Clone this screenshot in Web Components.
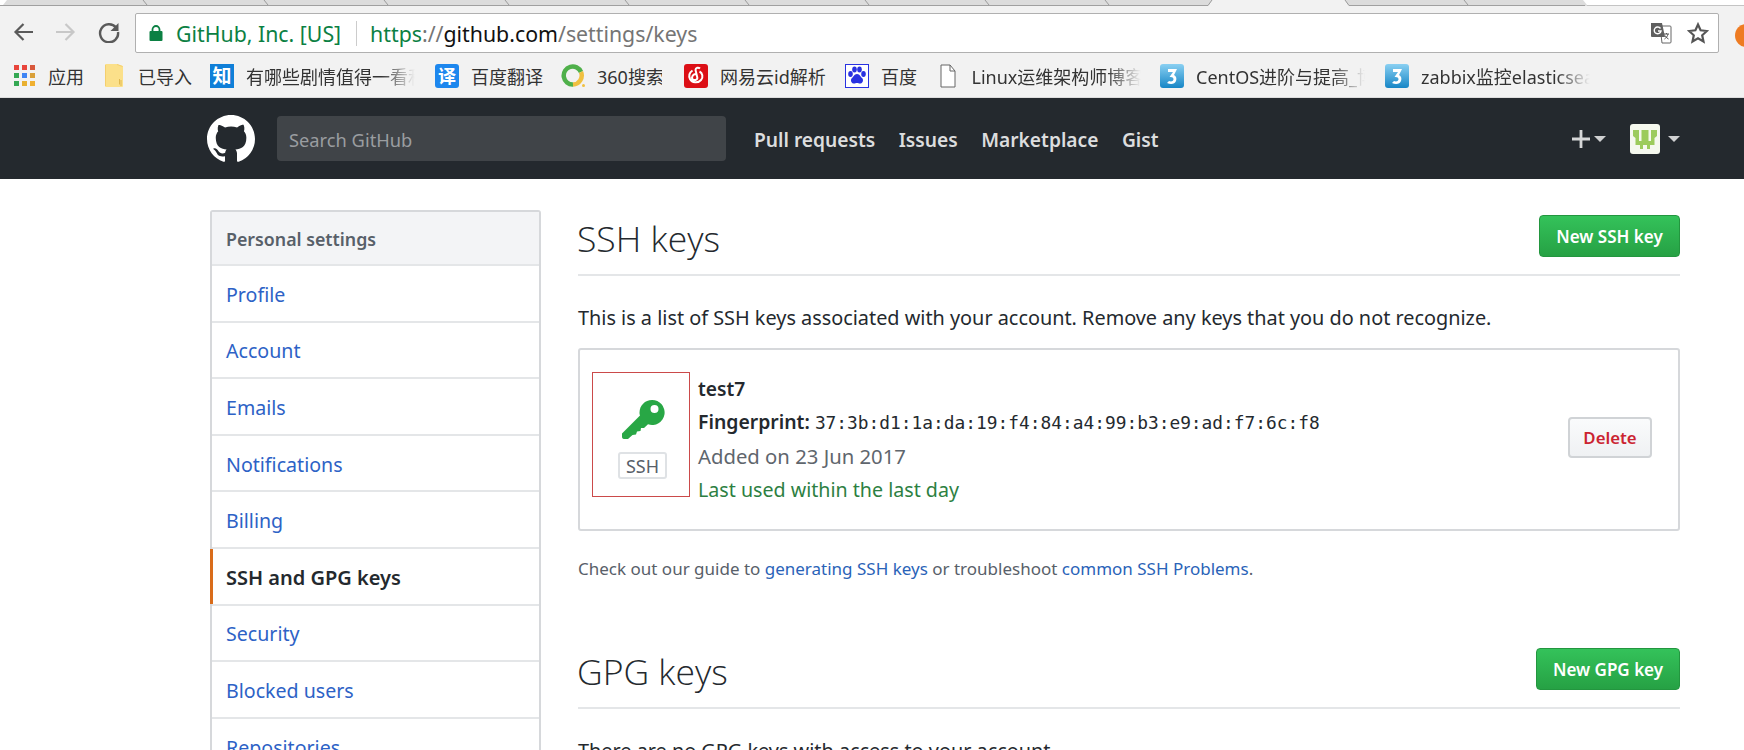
<!DOCTYPE html>
<html><head><meta charset="utf-8"><style>
html,body{margin:0;padding:0;width:1744px;height:750px;overflow:hidden;background:#fff;font-family:"Noto Sans","Noto Sans CJK SC",sans-serif}
</style></head><body>
<browser-tabs></browser-tabs>
<browser-toolbar></browser-toolbar>
<bookmark-bar>
 <book-mark label="应用" w="36" gap="18" icon="apps"></book-mark>
 <book-mark label="已导入" w="54" gap="18" icon="folder"></book-mark>
 <book-mark label="有哪些剧情值得一看和" w="169" gap="20" icon="zhi" fade></book-mark>
 <book-mark label="百度翻译" w="72" gap="18" icon="yi"></book-mark>
 <book-mark label="360搜索" w="65" gap="22" icon="s360"></book-mark>
 <book-mark label="网易云id解析" w="106" gap="19" icon="netease"></book-mark>
 <book-mark label="百度" w="36" gap="18.500" icon="baidu"></book-mark>
 <book-mark label="Linux运维架构师博客" w="169" gap="19.500" icon="doc" fade></book-mark>
 <book-mark label="CentOS进阶与提高_博" w="169" gap="20" icon="three" fade></book-mark>
 <book-mark label="zabbix监控elasticsearch" w="169" gap="0" icon="three" fade></book-mark>
</bookmark-bar>
<gh-header></gh-header>
<settings-page>
 <settings-menu slot="side">
  <menu-row>Profile</menu-row><menu-row>Account</menu-row><menu-row>Emails</menu-row><menu-row>Notifications</menu-row><menu-row>Billing</menu-row>
  <menu-row selected>SSH and GPG keys</menu-row><menu-row>Security</menu-row><menu-row>Blocked users</menu-row><menu-row>Repositories</menu-row>
 </settings-menu>
 <section-head title="SSH keys" action="New SSH key" btnw="141"></section-head>
 <p-text top="29">This is a list of SSH keys associated with your account. Remove any keys that you do not recognize.</p-text>
 <key-card></key-card>
 <guide-note></guide-note>
 <section-head title="GPG keys" action="New GPG key" btnw="144" style="margin-top:61px"></section-head>
 <p-text top="29">There are no GPG keys with access to your account.</p-text>
</settings-page>
<script>
function def(name, html){
  customElements.define(name, class extends HTMLElement{
    connectedCallback(){
      if(this.shadowRoot) return;
      const r=this.attachShadow({mode:'open'});
      r.innerHTML = typeof html==='function'?html(this):html;
    }
  });
}
def('browser-tabs',()=>{
  const xs=[145,266,386,507,627,747,867,987,1107,1466];
  let s='';
  xs.forEach(x=>{s+=`<path d="M${x-2} 0 L${x+2} 5" stroke="#9a9a9a" stroke-width="1" fill="none"/>`});
  return `<style>:host{display:block;height:6px;background:#d8d8d8}svg{display:block}</style>
  <svg width="1744" height="6" viewBox="0 0 1744 6">
  <rect width="1744" height="6" fill="#dcdcdc"/>
  <rect y="5" width="1208" height="1" fill="#a0a0a0"/><rect x="1349" y="5" width="236" height="1" fill="#a0a0a0"/>
  <path d="M1212 0 L1345 0 L1349 6 L1208 6Z" fill="#f2f2f2"/>
  <path d="M1212 0 L1208 5.500M1345 0L1349 5.500" stroke="#9a9a9a" fill="none"/>
  <path d="M1583 0 L1587 5 L1587 6 L1744 6 L1744 0Z" fill="#fff"/>
  <rect x="1587" y="5" width="157" height="1" fill="#c4c4c4"/>
  <path d="M0 0 L7 0 L3 5 L0 5Z" fill="#fff"/>
  ${s}</svg>`;
});
def('browser-toolbar',`<style>
:host{display:flex;align-items:center;height:48px;background:#f2f2f2;box-sizing:border-box;padding:7px 0 1px 12px;position:relative;overflow:hidden}
svg{display:block;flex:none}
.nav{display:flex;align-items:center;gap:21px;width:123px;flex:none;margin-top:-2px}
.omni{flex:none;width:1584px;height:40px;box-sizing:border-box;background:#fff;border:1px solid #b0b0b0;border-radius:2px;display:flex;align-items:center;padding-left:13px;font-size:21.300px;white-space:nowrap}
.sec{color:#0b8043;margin-left:13px}
.sep{width:1px;height:25px;background:#ccc;margin:0 13px 0 15px}
.https{color:#0b8043}.dim{color:#757575}.host{color:#111}
.right{margin-left:auto;display:flex;align-items:center;gap:15px;padding-right:9px}
.ext{position:absolute;left:1735px;top:18px;width:23px;height:23px;border-radius:50%;background:#ee7b22}
</style>
<div class="nav">
<svg width="22" height="22" viewBox="0 0 22 22"><path d="M21 11H4M11.500 3L3.500 11l8 8" fill="none" stroke="#5a5a5a" stroke-width="2.200"/></svg>
<svg width="22" height="22" viewBox="0 0 22 22"><path d="M1 11h17M10.500 3L18.500 11l-8 8" fill="none" stroke="#c8c8c8" stroke-width="2.200"/></svg>
<svg width="22" height="22" viewBox="0 0 22 22"><path d="M18 6.500A9 9 0 1 0 20 11" fill="none" stroke="#5a5a5a" stroke-width="2.400"/><path d="M20.500 2v8h-8z" fill="#5a5a5a"/></svg>
</div>
<div class="omni">
<svg width="14" height="16" viewBox="0 0 14 16"><path d="M3.500 7V4.500a3.500 3.500 0 0 1 7 0V7" fill="none" stroke="#0b8043" stroke-width="1.800"/><rect x="0.500" y="6" width="13" height="10" rx="1" fill="#0b8043"/></svg>
<span class="sec">GitHub, Inc. [US]</span><span class="sep"></span>
<span><span class="https">https</span><span class="dim">://</span><span class="host">github.com</span><span class="dim">/settings/keys</span></span>
<div class="right">
<svg width="22" height="22" viewBox="0 0 22 22"><path d="M10 4h10a1 1 0 0 1 1 1v15a1 1 0 0 1-1 1h-8z" fill="#fff" stroke="#666"/><path d="M1 1h11l3 14H2a1 1 0 0 1-1-1z" fill="#5f5f5f"/><path d="M10.500 6.500A3.400 3.400 0 1 0 11 9H8" fill="none" stroke="#fff" stroke-width="1.400"/><path d="M14 12h5M16.500 11v1M18 12c-.500 2.500-2 4-3.500 5M15 13.500c.8 1.500 2 2.800 3.500 3.500" fill="none" stroke="#555"/></svg>
<svg width="22" height="22" viewBox="0 0 22 22"><path d="M11 2.500l2.600 5.800 6.300.7-4.700 4.300 1.300 6.200L11 16.300l-5.500 3.200 1.300-6.200L2.100 9l6.300-.7z" fill="none" stroke="#555" stroke-width="2.200" stroke-linejoin="miter"/></svg>
</div></div>
<div class="ext"></div>`);
def('bookmark-bar',`<style>:host{display:flex;align-items:center;height:44px;background:#f2f2f2;padding-left:12px;box-sizing:border-box;border-bottom:1px solid #ddd;overflow:hidden}</style><slot></slot>`);
const ICONS={
apps:`<svg width="21" height="21" viewBox="0 0 21 21">${[['#e8453c','#e8453c','#d8583c'],['#34a853','#3f85f4','#d9a03a'],['#34a853','#e8b030','#f0b030']].map((r,j)=>r.map((c,i)=>`<rect x="${i*8}" y="${j*8}" width="5" height="5" fill="${c}"/>`).join('')).join('')}</svg>`,
folder:`<svg width="18" height="23" viewBox="0 0 18 23"><path d="M1 0h11l6 2v20a1 1 0 0 1-1 1H1a1 1 0 0 1-1-1V1a1 1 0 0 1 1-1z" fill="#fbe08a"/><path d="M14.500 15v5.500M16 16v6" stroke="#e0b850" fill="none"/><path d="M.5 1v21M12 .5l5.500 2" stroke="#f4cf6e" fill="none"/></svg>`,
zhi:`<svg width="24" height="24" viewBox="0 0 24 24"><rect width="24" height="24" fill="#0f7fd8"/><text x="12" y="19" text-anchor="middle" font-size="19" font-weight="700" fill="#fff" font-family="Noto Sans CJK SC">知</text></svg>`,
yi:`<svg width="24" height="24" viewBox="0 0 24 24"><rect width="24" height="24" rx="3" fill="#1d87ee"/><text x="12" y="19" text-anchor="middle" font-size="18" font-weight="700" fill="#fff" font-family="Noto Sans CJK SC">译</text></svg>`,
s360:`<svg width="24" height="24" viewBox="0 0 24 24"><path d="M20 8A9 9 0 1 0 12 20.500" fill="none" stroke="#4fb04a" stroke-width="4.500"/><path d="M12 20.500A9 9 0 0 0 20 8" fill="none" stroke="#f0c040" stroke-width="4.500"/><circle cx="22.500" cy="21.500" r="1.500" fill="#f0c040"/></svg>`,
netease:`<svg width="24" height="24" viewBox="0 0 24 24"><rect width="24" height="24" rx="3" fill="#dc0f16"/><path d="M16 4.500c-1.500-1.500-4.500-1-4.500 1.500l1.800 7.500c.5 2.500-3.500 3.500-4.800 1.500-1.200-2 .2-4.500 3-5M15.500 7.500c3 1.500 4 5.500 1.500 8.500-3 3.500-9 3-11-1-1.300-3-.5-6.500 2.500-8.500" fill="none" stroke="#fff" stroke-width="2"/></svg>`,
baidu:`<svg width="24" height="24" viewBox="0 0 24 24"><rect x=".5" y=".5" width="23" height="23" fill="#fff" stroke="#2932e1"/><g fill="#2932e1"><ellipse cx="5.500" cy="10" rx="2.300" ry="3"/><ellipse cx="9.500" cy="5.500" rx="2.300" ry="3"/><ellipse cx="14.500" cy="5.500" rx="2.300" ry="3"/><ellipse cx="18.500" cy="10" rx="2.300" ry="3"/><path d="M12 10c3 0 3.500 3 5 4s1.500 5-1.500 5.500c-1.500.2-2-.5-3.500-.5s-2 .7-3.500.5C5.500 19 5.500 15 7 14s2-4 5-4z"/></g></svg>`,
doc:`<svg width="16" height="24" viewBox="0 0 16 24"><path d="M1 1h9l5 6v16H1z" fill="#fff" stroke="#666"/><path d="M10 1v6h5" fill="none" stroke="#666"/></svg>`,
three:`<svg width="24" height="24" viewBox="0 0 24 24"><defs><linearGradient id="g" x1="0" y1="0" x2="0" y2="1"><stop offset="0" stop-color="#8ad0f2"/><stop offset="1" stop-color="#1786c6"/></linearGradient></defs><rect width="24" height="24" rx="3" fill="url(#g)"/><path d="M8 5h9l-3 6c2 1 3 3 2 6-1 3-5 4-9 2l2-2c2 1 4 .5 4.500-1.500.3-1.500-1-3-4-2.500L13 8H8z" fill="#fff"/></svg>`
};
customElements.define('book-mark',class extends HTMLElement{
 connectedCallback(){ if(this.shadowRoot) return;
  const r=this.attachShadow({mode:'open'});
  const fade=this.hasAttribute('fade');
  r.innerHTML=`<style>:host{display:flex;align-items:center;flex:none;margin-right:${this.getAttribute('gap')}px}
  .i{width:24px;height:24px;display:flex;align-items:center;justify-content:center;margin-right:12px}
  .l{display:block;width:${this.getAttribute('w')}px;overflow:hidden;white-space:nowrap;font-size:18px;color:#333;${fade?'-webkit-mask-image:linear-gradient(90deg,#000 80%,transparent);mask-image:linear-gradient(90deg,#000 80%,transparent);':''}}</style>
  <span class="i">${ICONS[this.getAttribute('icon')]}</span><span class="l">${this.getAttribute('label')}</span>`;
 }
});
def('gh-header',`<style>
:host{display:flex;align-items:center;height:81px;background:#24292e;box-sizing:border-box;padding-left:207px;color:#fff}
svg{display:block;flex:none}
.search{width:449px;height:45px;margin-left:22px;background:#404448;border-radius:4px;color:#9a9da0;font-size:18.300px;display:flex;align-items:center;padding:1px 0 0 12px;box-sizing:border-box}
nav{display:flex;margin-left:28px;gap:23.500px;font-size:19.200px;font-weight:600;color:#dcddde;padding-top:2px}
.r{margin-left:auto;display:flex;align-items:center;padding-right:64px}
.c{width:0;height:0;border:6px solid transparent;border-top:6px solid #d0d1d2;border-bottom:0}
.ava{width:30px;height:30px;background:#f5f8ee;border-radius:3px;margin:0 8px 0 24px;display:flex;align-items:center;justify-content:center}
</style>
<svg width="48" height="48" viewBox="0 0 16 16"><path fill="#fff" fill-rule="evenodd" d="M8 0C3.580 0 0 3.580 0 8c0 3.540 2.290 6.530 5.470 7.590.4.070.55-.17.55-.38 0-.19-.01-.82-.01-1.490-2.010.37-2.530-.49-2.690-.94-.09-.23-.48-.94-.82-1.130-.28-.15-.68-.52-.01-.53.630-.010 1.080.58 1.230.82.720 1.210 1.870.87 2.330.66.070-.52.280-.87.510-1.070-1.780-.2-3.640-.89-3.640-3.950 0-.87.310-1.590.820-2.150-.08-.2-.36-1.020.08-2.120 0 0 .67-.21 2.200.82.640-.18 1.320-.27 2-.27.680 0 1.360.09 2 .27 1.530-1.040 2.200-.82 2.200-.82.440 1.100.160 1.920.080 2.120.510.560.820 1.270.820 2.150 0 3.070-1.870 3.750-3.650 3.950.290.250.540.730.540 1.480 0 1.070-.010 1.930-.010 2.200 0 .210.150.460.550.380A8.013 8.013 0 0 0 16 8c0-4.420-3.580-8-8-8z"/></svg>
<div class="search">Search GitHub</div>
<nav><span>Pull requests</span><span>Issues</span><span>Marketplace</span><span>Gist</span></nav>
<div class="r">
<svg width="20" height="20" viewBox="0 0 20 20"><path d="M10 1v18M1 10h18" stroke="#d6d7d8" stroke-width="2.800"/></svg>
<span class="c" style="margin-left:3px"></span>
<span class="ava"><svg width="26" height="23" viewBox="0 0 26 23"><path d="M1 3h6v11h2.500V3h7v11H19V3h6v6l-2.500 2v7H18v4h-3v-4h-4v4H8v-4H3.500v-7L1 9z" fill="#9ccb5c"/></svg></span>
<span class="c"></span>
</div>`);
def('settings-page',`<style>
:host{display:grid;grid-template-columns:331px 1102px;column-gap:37px;padding:31px 0 0 210px;align-items:start;height:571px;overflow:hidden;box-sizing:border-box}
.main{display:block;min-width:0}
</style><slot name="side"></slot><div class="main"><slot></slot></div>`);
def('settings-menu',`<style>
:host{display:block;border:2px solid #d6d8db;border-radius:3px;box-sizing:border-box;font-size:19.600px}
.h{height:52px;background:#f3f4f6;color:#586069;font-weight:600;font-size:17.800px;display:flex;align-items:center;padding:1px 0 0 14px;box-sizing:border-box}
</style><div class="h">Personal settings</div><slot></slot>`);
customElements.define('menu-row',class extends HTMLElement{
 connectedCallback(){ if(this.shadowRoot) return;
  const s=this.hasAttribute('selected');
  this.attachShadow({mode:'open'}).innerHTML=`<style>
  :host{display:flex;align-items:center;height:56.600px;box-sizing:border-box;border-top:2px solid #e4e6e8;padding:2px 0 0 14px;color:${s?'#24292e':'#2d62c6'};font-weight:${s?600:400};${s?'font-size:20px;':''}position:relative}
  ${s?'i{position:absolute;left:-2px;top:0;bottom:0;width:3px;background:#d96c1a}':''}
  </style>${s?'<i></i>':''}<slot></slot>`;
 }
});
customElements.define('section-head',class extends HTMLElement{
 connectedCallback(){ if(this.shadowRoot) return;
  const w=this.getAttribute('btnw');
  this.attachShadow({mode:'open'}).innerHTML=`<style>
  :host{display:flex;align-items:flex-end;justify-content:space-between;height:66px;box-sizing:border-box;border-bottom:2px solid #e4e6e8;padding-bottom:17px}
  h2{margin:0 0 -4px -1px;font-weight:300;font-size:35.500px;color:#24292e;line-height:46px;font-family:"Open Sans","Noto Sans",sans-serif}
  .b{width:${w}px;height:42px;border-radius:4px;box-sizing:border-box;background:linear-gradient(#34c25a,#26a144);border:1px solid #23963f;color:#fff;font-weight:600;font-size:17px;display:flex;align-items:center;justify-content:center}
  </style><h2>${this.getAttribute('title')}</h2><div class="b">${this.getAttribute('action')}</div>`;
 }
});
customElements.define('p-text',class extends HTMLElement{
 connectedCallback(){ if(this.shadowRoot) return;
  this.attachShadow({mode:'open'}).innerHTML=`<style>:host{display:block;margin-top:${this.getAttribute('top')}px;font-size:19.850px;line-height:26px;color:#24292e}</style><slot></slot>`;
 }
});
def('key-card',`<style>
:host{display:flex;align-items:flex-start;margin-top:17px;height:183px;box-sizing:border-box;border:2px solid #d6d8db;border-radius:3px;padding:22px 26px 0 12px}
.ico{width:98px;height:125px;box-sizing:border-box;border:1px solid #cb4a4a;display:flex;flex-direction:column;align-items:center;flex:none}
.ico svg{margin:27px 0 0 5px;display:block}
.tag{margin:12px 0 0 3px;width:49px;height:27px;box-sizing:border-box;border:2px solid #dfe2e5;border-radius:3px;font-size:18px;color:#586069;display:flex;align-items:center;justify-content:center}
.t{margin:0 0 24px 8px;align-self:center;padding-top:1px;font-size:19.650px;line-height:33.300px;color:#5f666d}
.t b{display:block;font-weight:600;color:#24292e;font-size:19.200px}
.fp{font-weight:600;color:#24292e;font-size:19.400px}.fp code{font-family:"DejaVu Sans Mono",monospace;font-weight:400;font-size:17.850px}
.a{font-size:20.300px}
.g{color:#2d7f42}
.del{margin:0 0 26px auto;align-self:center;width:84px;height:41px;box-sizing:border-box;border:2px solid #d0d3d6;border-radius:4px;background:linear-gradient(#fafbfc,#eff1f3);color:#cb2431;font-weight:600;font-size:16.800px;display:flex;align-items:center;justify-content:center}
</style>
<div class="ico"><svg width="43" height="40" viewBox="0 0 43 40"><path fill="#28a745" fill-rule="evenodd" d="M30 0a12.500 12.500 0 1 1-4 24.300L22 28l-3 0-.5 3-3.500.5-1 3-3.500.5L6 39H2c-1.500 0-2-1-2-2.500v-3L18 15.500C17.500 14 17.500 13 17.500 12.500 17.500 5.500 23 0 30 0zm2.500 5a4 4 0 1 0 0 8 4 4 0 0 0 0-8z"/></svg><span class="tag">SSH</span></div>
<div class="t"><b>test7</b><div><span class="fp">Fingerprint: <code>37:3b:d1:1a:da:19:f4:84:a4:99:b3:e9:ad:f7:6c:f8</code></span></div><div class="a">Added on 23 Jun 2017</div><div class="g">Last used within the last day</div></div>
<div class="del">Delete</div>`);
def('guide-note',`<style>:host{display:block;margin-top:25px;font-size:17px;line-height:26px;color:#586069}span{color:#2a63b8}</style>Check out our guide to <span>generating SSH keys</span> or troubleshoot <span>common SSH Problems</span>.`);
</script>
</body></html>
